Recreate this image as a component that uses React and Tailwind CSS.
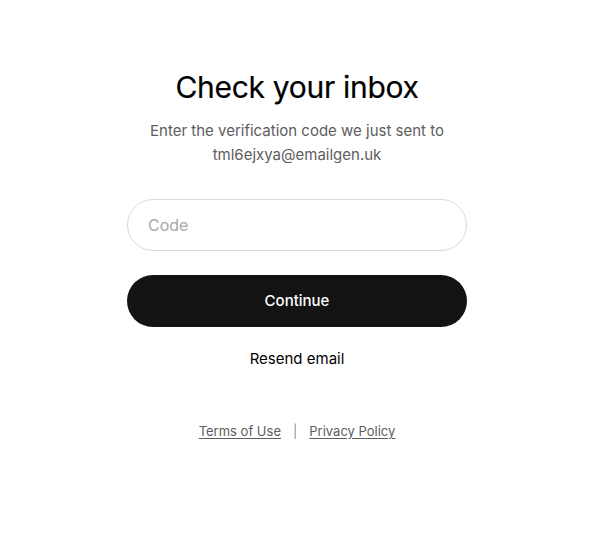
import React, { useState } from "react";

const font = { fontFamily: "Inter, 'Noto Sans', sans-serif" };

const VerifyEmail = () => {
    const [code, setCode] = useState("");

    return (
        <div className="min-h-screen bg-white flex justify-center" style={font}>
            <div className="w-[340px] flex flex-col items-center pt-[68px]">
                <h1 className="text-[30px] leading-[38px] font-normal text-black tracking-[-0.3px] [-webkit-text-stroke:0.2px_black]">
                    Check your inbox
                </h1>
                <p className="mt-[13px] text-[15px] leading-[24px] text-[#5d5d5d] text-center">
                    Enter the verification code we just sent to
                    <br />
                    tml6ejxya@emailgen.uk
                </p>

                <input
                    value={code}
                    onChange={(e) => setCode(e.target.value)}
                    placeholder="Code"
                    className="mt-[32px] w-full h-[52px] rounded-full border border-[#d9d9d9] px-5 text-[16px] text-black placeholder:text-[#a8a8a8] outline-none"
                />

                <button className="mt-[24px] w-full h-[52px] rounded-full bg-[#131313] text-white text-[15px] font-medium">
                    Continue
                </button>

                <button className="mt-[20px] h-[24px] text-[15px] leading-[24px] text-black">
                    Resend email
                </button>

                <div className="mt-[50px] flex items-center gap-3 text-[13px] leading-[20px] text-[#5d5d5d]">
                    <a href="#" className="underline underline-offset-2">Terms of Use</a>
                    <span className="text-[#8f8f8f]">|</span>
                    <a href="#" className="underline underline-offset-2">Privacy Policy</a>
                </div>
            </div>
        </div>
    );
};

export default function App() {
    return <VerifyEmail />;
}
